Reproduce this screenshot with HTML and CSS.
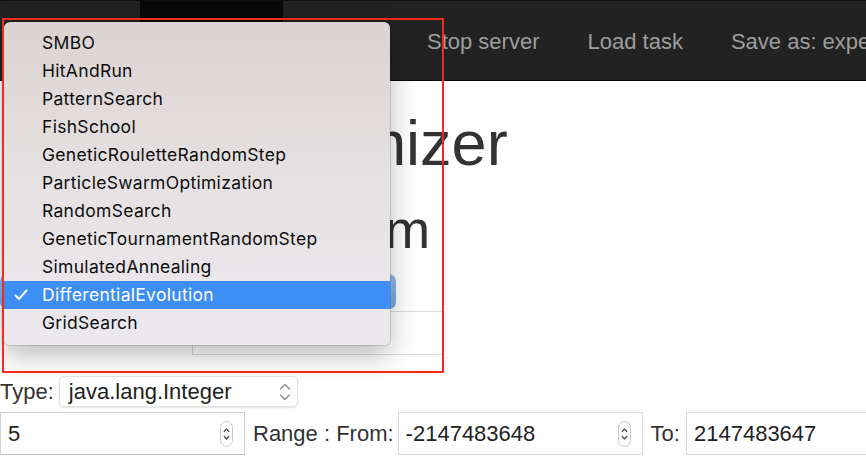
FILE: index.html
```html
<!DOCTYPE html>
<html lang="en">
<head>
<meta charset="utf-8">
<title>Remote Optimizer</title>
<link rel="stylesheet" href="styles.css">
</head>
<body>
<nav class="navbar">
  <div class="nav-item brand"></div>
  <div class="nav-item active"></div>
  <div class="nav-item spacer-item"></div>
  <div class="nav-item">Stop server</div>
  <div class="nav-item">Load task</div>
  <div class="nav-item">Save as: expe</div>
</nav>

<main class="content">
  <h1 class="title">Remote Optimizer</h1>
  <h2 class="subtitle">Choose Algorithm</h2>
  <div class="algo-select"></div>

  <div class="name-row">
    <span class="name-label"></span>
    <div class="name-input">p;j</div>
  </div>

  <div class="type-row">
    <span class="field-label">Type:</span>
    <div class="type-select">
      <span>java.lang.Integer</span>
      <svg class="select-arrows" width="14" height="22" viewBox="0 0 14 22">
        <path d="M2.5 8 L7 3.5 L11.5 8" />
        <path d="M2.5 14 L7 18.5 L11.5 14" />
      </svg>
    </div>
  </div>

  <div class="number-row">
    <div class="num-input first">
      <span>5</span>
      <svg class="spinner" width="13" height="26" viewBox="0 0 13 26">
        <rect x="0.5" y="0.5" width="12" height="25" rx="6" />
        <path d="M4.2 10.5 L6.5 8 L8.8 10.5" />
        <path d="M4.2 15.5 L6.5 18 L8.8 15.5" />
      </svg>
    </div>
    <span class="field-label range-label">Range : From:</span>
    <div class="num-input">
      <span>-2147483648</span>
      <svg class="spinner" width="13" height="26" viewBox="0 0 13 26">
        <rect x="0.5" y="0.5" width="12" height="25" rx="6" />
        <path d="M4.2 10.5 L6.5 8 L8.8 10.5" />
        <path d="M4.2 15.5 L6.5 18 L8.8 15.5" />
      </svg>
    </div>
    <span class="field-label to-label">To:</span>
    <div class="num-input last">
      <span>2147483647</span>
    </div>
  </div>
</main>

<div class="popup-menu">
  <div class="menu-item">SMBO</div>
  <div class="menu-item">HitAndRun</div>
  <div class="menu-item">PatternSearch</div>
  <div class="menu-item">FishSchool</div>
  <div class="menu-item">GeneticRouletteRandomStep</div>
  <div class="menu-item">ParticleSwarmOptimization</div>
  <div class="menu-item">RandomSearch</div>
  <div class="menu-item">GeneticTournamentRandomStep</div>
  <div class="menu-item">SimulatedAnnealing</div>
  <div class="menu-item selected">
    <svg class="check" width="14" height="12" viewBox="0 0 14 12"><path d="M1.5 6.5 L5 10 L12.5 1.5" /></svg>
    DifferentialEvolution
  </div>
  <div class="menu-item">GridSearch</div>
</div>

<div class="annotation"></div>
</body>
</html>
```

FILE: styles.css
```css
* { box-sizing: border-box; }

body {
  margin: 0;
  width: 866px;
  height: 470px;
  overflow: hidden;
  position: relative;
  background: #fff;
  color: #333;
  font-family: "Liberation Sans", Arial, sans-serif;
}

/* ---------- navbar ---------- */
.navbar {
  display: flex;
  height: 81px;
  background: #222;
  border-top: 1px solid #0e0e0e;
  border-bottom: 1px solid #080808;
  white-space: nowrap;
  overflow: hidden;
}

.nav-item {
  flex: none;
  padding: 3px 24px 0;
  font-size: 22px;
  line-height: 76px;
  color: #9d9d9d;
}

.brand {
  width: 140px;
  padding: 0;
}

.active {
  width: 143px;
  padding: 0;
  background: #080808;
}

.spacer-item {
  width: 120px;
  padding: 0;
}

/* ---------- content ---------- */
.content {
  display: flex;
  flex-direction: column;
}

.title {
  margin: 28px 0 0;
  font-size: 63px;
  line-height: 68px;
  font-weight: 400;
  color: #333;
  white-space: nowrap;
}

.subtitle {
  margin: 24px 0 0;
  font-size: 54.5px;
  line-height: 58px;
  font-weight: 400;
  color: #333;
  white-space: nowrap;
}

.algo-select {
  margin-top: 15px;
  width: 396px;
  height: 35px;
  border-radius: 7px;
  background: linear-gradient(#93c0f1, #6ea8ea);
}

.name-row {
  display: flex;
  margin-top: 2px;
  height: 44px;
}

.name-label {
  width: 192px;
}

.name-input {
  width: 251px;
  height: 44px;
  border: 1px solid #dcdcdc;
  padding-left: 6px;
  font-size: 22px;
  line-height: 42px;
  color: #333;
}

.type-row {
  display: flex;
  align-items: center;
  gap: 5px;
  margin-top: 21px;
  height: 31px;
}

.field-label {
  font-size: 22px;
  color: #333;
  white-space: nowrap;
}

.type-select {
  width: 239px;
  height: 31px;
  border: 1px solid #e4e4e4;
  border-radius: 5px;
  box-shadow: 0 1px 2px rgba(0, 0, 0, 0.12);
  display: flex;
  align-items: center;
  justify-content: space-between;
  padding: 0 5px 0 9px;
  font-size: 22px;
  color: #222;
}

.select-arrows path {
  fill: none;
  stroke: #8a8a8a;
  stroke-width: 1.3;
  stroke-linecap: round;
  stroke-linejoin: round;
}

.number-row {
  display: flex;
  align-items: center;
  margin-top: 5px;
  height: 43px;
}

.num-input {
  flex: 0 0 245px;
  width: 245px;
  height: 43px;
  border: 1px solid #dadada;
  display: flex;
  align-items: center;
  justify-content: space-between;
  padding: 0 11px 0 7px;
  font-size: 22px;
  color: #222;
}

.num-input.first {
  border-color: #d2d2d2 #cfcfcf #bdbdbd #d2d2d2;
}

.num-input.last {
  flex: 1 1 auto;
  width: auto;
  border-right: none;
}

.range-label {
  margin: 0 4px 0 8px;
}

.to-label {
  margin: 0 6px 0 8px;
}

.spinner rect {
  fill: #fff;
  stroke: #c6c6c6;
}

.spinner path {
  fill: none;
  stroke: #4a4a4a;
  stroke-width: 1.2;
  stroke-linecap: round;
  stroke-linejoin: round;
}

/* ---------- popup menu (overlay) ---------- */
.popup-menu {
  position: absolute;
  left: 4px;
  top: 22px;
  width: 386px;
  padding: 7px 0 8px;
  border-radius: 6px;
  background: linear-gradient(#dcd3d2, #e6e2e3 50%, #ece9ee);
  box-shadow: 0 0 0 1px rgba(0, 0, 0, 0.13), 0 10px 28px rgba(0, 0, 0, 0.28);
  font-family: Inter, "Liberation Sans", sans-serif;
  font-size: 17.5px;
  letter-spacing: 0.3px;
  color: #0d0d0d;
}

.menu-item {
  position: relative;
  height: 28px;
  line-height: 28px;
  padding-left: 38px;
  white-space: nowrap;
}

.menu-item.selected {
  background: #3d8ef5;
  color: #fff;
}

.check {
  position: absolute;
  left: 10px;
  top: 8px;
}

.check path {
  fill: none;
  stroke: #fff;
  stroke-width: 2;
  stroke-linecap: round;
  stroke-linejoin: round;
}

/* ---------- red annotation box (overlay) ---------- */
.annotation {
  position: absolute;
  left: 2px;
  top: 18px;
  width: 442px;
  height: 355px;
  border: 2px solid #f5291c;
  pointer-events: none;
}
```
